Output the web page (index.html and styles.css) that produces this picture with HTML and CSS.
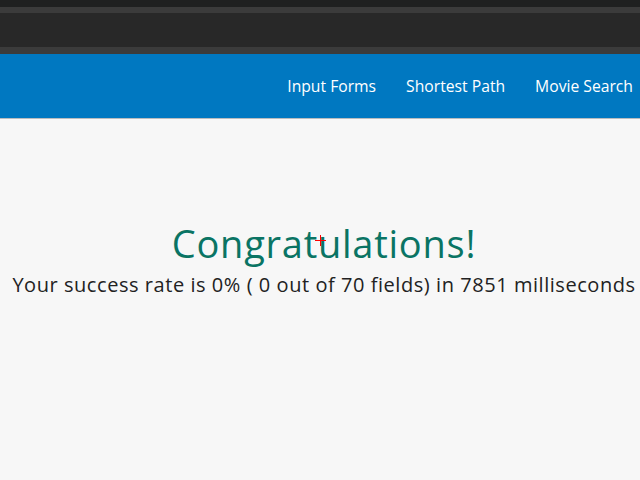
FILE: index.html
```html
<!DOCTYPE html>
<html>
<head>
<meta charset="utf-8">
<link rel="stylesheet" href="styles.css">
</head>
<body>
<div class="topbar">
  <div class="band band-dark-top"></div>
  <div class="band band-light"></div>
  <div class="band band-main"></div>
  <div class="band band-light2"></div>
</div>
<nav class="nav">
  <a class="nav-link">Input Forms</a>
  <a class="nav-link">Shortest Path</a>
  <a class="nav-link">Movie Search</a>
</nav>
<main class="main">
  <h1 class="title">Congratulations!</h1>
  <p class="result">Your success rate is 0% ( 0 out of 70 fields) in 7851 milliseconds</p>
</main>
<div class="cursor"></div>
</body>
</html>
```
FILE: styles.css
```css
html, body {
  margin: 0;
  padding: 0;
  background: #f7f7f7;
  font-family: "Open Sans", "DejaVu Sans", sans-serif;
  width: 640px;
  height: 480px;
  overflow: hidden;
}
.topbar { display: flex; flex-direction: column; }
.band { width: 100%; }
.band-dark-top { height: 7px; background: #1f2020; }
.band-light { height: 6px; background: #3b3b3b; }
.band-main { height: 34px; background: #282828; }
.band-light2 { height: 7px; background: #3b3b3b; }
.nav {
  height: 64px;
  background: #0078c1;
  border-bottom: 1px solid #b9bcbf;
  display: flex;
  justify-content: flex-end;
  align-items: center;
  gap: 30px;
  padding-right: 7px;
}
.nav-link {
  color: #ffffff;
  font-size: 15.7px;
  line-height: 20px;
  margin-top: -1px;
}
.main {
  display: flex;
  flex-direction: column;
  align-items: center;
  padding-top: 99px;
  padding-left: 8px;
}
.title {
  margin: 0;
  font-weight: 400;
  font-size: 38px;
  line-height: 50px;
  letter-spacing: 0.75px;
  color: #0a7464;
}
.result {
  margin: 0;
  font-size: 20px;
  line-height: 30px;
  letter-spacing: 0.55px;
  color: #222222;
  white-space: nowrap;
  margin-top: 2px;
}
.cursor {
  position: absolute;
  left: 315px;
  top: 235px;
  width: 11px;
  height: 11px;
}
.cursor::before, .cursor::after {
  content: "";
  position: absolute;
  background: #ff0000;
}
.cursor::before { left: 5px; top: 0; width: 1px; height: 11px; }
.cursor::after { left: 0; top: 5px; width: 11px; height: 1px; }
```
